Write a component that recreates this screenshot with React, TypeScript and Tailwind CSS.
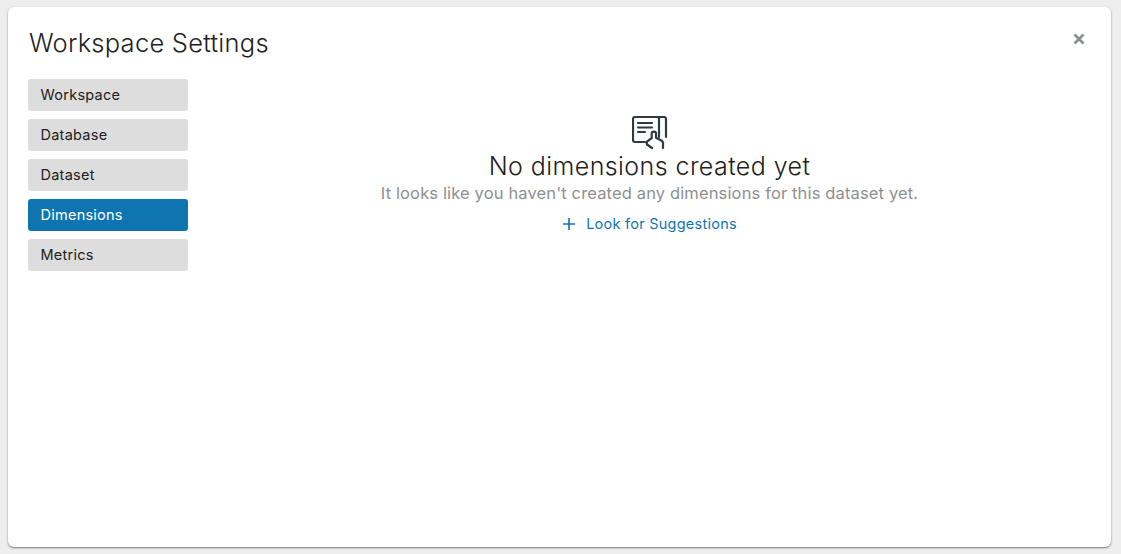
export default function App() {
  const items = ["Workspace", "Database", "Dataset", "Dimensions", "Metrics"];
  return (
    <div className="h-[554px] w-full overflow-hidden bg-[#eeeeee] pt-[7px] pl-[8px] pr-[10px] font-['Inter',sans-serif]">
      <div className="relative h-[540px] w-full rounded-[6px] bg-white pl-[20px] pr-[20px] pt-[19px] shadow-[0_1px_2px_rgba(0,0,0,0.5)]">
        <h1 className="h-[53px] pl-[1px] text-[25.5px] leading-[33px] font-light tracking-[0.25px] text-[#222222]">Workspace Settings</h1>
        <button className="absolute right-[25px] top-[25px] text-[#8a8f94]">
          <svg width="14" height="14" viewBox="0 0 14 14" fill="none" stroke="currentColor" strokeWidth="2.6">
            <path d="M2.5 2.5 L11.5 11.5 M11.5 2.5 L2.5 11.5" />
          </svg>
        </button>
        <div className="flex">
          <nav className="flex w-[160px] shrink-0 flex-col gap-[8px]">
            {items.map((t) => (
              <div
                key={t}
                className={
                  t === "Dimensions"
                    ? "flex h-[32px] items-center rounded-[3px] bg-[#0f75b1] pl-[12.5px] text-[14.5px] tracking-[0.25px] text-white"
                    : "flex h-[32px] items-center rounded-[3px] bg-[#dddddd] pl-[12.5px] text-[14.5px] tracking-[0.25px] text-[#222222]"
                }
              >
                {t}
              </div>
            ))}
          </nav>
          <div className="flex flex-1 flex-col items-center pt-[37px] pl-[20px]">
            <svg width="36" height="34" viewBox="0 0 36 34" fill="none" stroke="#2f3a45" strokeWidth="2.2" strokeLinecap="round" strokeLinejoin="round">
              <path d="M13 26 H3 a2 2 0 0 1 -2 -2 V3 a2 2 0 0 1 2 -2 H32 a2 2 0 0 1 2 2 V21" />
              <path d="M27 1 V21" />
              <path d="M6 7 H20 M6 11.5 H20 M6 16 H13" />
              <path d="M20 32 L15 28.5 Q14 26 16 24.8 L19.7 22 V17.5 Q19.7 15.7 21.8 15.7 Q24 15.7 24 17.5 V21.7 L29.5 24.5 Q31 25.5 31 27 V32" />
            </svg>
            <h2 className="text-[25px] leading-[32px] font-[350] tracking-[0.42px] text-[#222222]">No dimensions created yet</h2>
            <p className="text-[16.5px] leading-[22px] font-normal tracking-[0.14px] text-[#8f8f8f]">It looks like you haven't created any dimensions for this dataset yet.</p>
            <a className="mt-[9px] flex items-center gap-[10px] text-[14.5px] leading-[22px] tracking-[0.25px] text-[#0f75b1]">
              <svg width="14" height="14" viewBox="0 0 14 14" fill="none" stroke="currentColor" strokeWidth="1.6">
                <path d="M7 1 V13 M1 7 H13" />
              </svg>
              Look for Suggestions
            </a>
          </div>
        </div>
      </div>
    </div>
  );
}
